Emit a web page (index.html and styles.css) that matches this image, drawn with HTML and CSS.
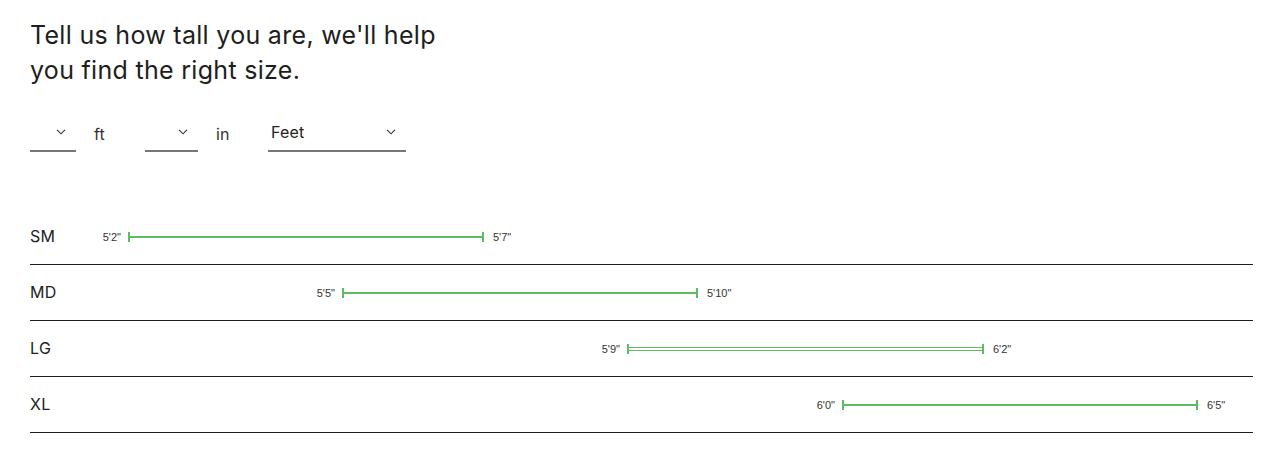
FILE: index.html
```html
<!DOCTYPE html>
<html lang="en">
<head>
<meta charset="utf-8">
<title>Size finder</title>
<link rel="stylesheet" href="styles.css">
</head>
<body>
<main class="finder">
  <h1 class="title">Tell us how tall you are, we'll help<br>you find the right size.</h1>

  <div class="controls">
    <div class="group">
      <div class="select select--ft">
        <span class="select__value"></span>
        <svg class="chev" width="10" height="6" viewBox="0 0 10 6"><path d="M1 0.8l4 4 4-4" fill="none" stroke="#333" stroke-width="1.1"/></svg>
      </div>
      <span class="unit unit--ft">ft</span>
    </div>
    <div class="group">
      <div class="select select--in">
        <span class="select__value"></span>
        <svg class="chev" width="10" height="6" viewBox="0 0 10 6"><path d="M1 0.8l4 4 4-4" fill="none" stroke="#333" stroke-width="1.1"/></svg>
      </div>
      <span class="unit unit--in">in</span>
    </div>
    <div class="group">
      <div class="select select--unit">
        <span class="select__value">Feet</span>
        <svg class="chev" width="10" height="6" viewBox="0 0 10 6"><path d="M1 0.8l4 4 4-4" fill="none" stroke="#333" stroke-width="1.1"/></svg>
      </div>
    </div>
  </div>

  <div class="sizes">
    <div class="size-row">
      <span class="size-label">SM</span>
      <div class="track">
        <div class="range" style="margin-left:12px">
          <span class="range__from">5'2"</span>
          <div class="bar" style="width:356px"><span class="bar__line"></span></div>
          <span class="range__to">5'7"</span>
        </div>
      </div>
    </div>
    <div class="size-row">
      <span class="size-label">MD</span>
      <div class="track">
        <div class="range" style="margin-left:226px">
          <span class="range__from">5'5"</span>
          <div class="bar" style="width:356px"><span class="bar__line"></span></div>
          <span class="range__to">5'10"</span>
        </div>
      </div>
    </div>
    <div class="size-row">
      <span class="size-label">LG</span>
      <div class="track">
        <div class="range" style="margin-left:511px">
          <span class="range__from">5'9"</span>
          <div class="bar bar--hollow" style="width:357px"><span class="bar__line"></span></div>
          <span class="range__to">6'2"</span>
        </div>
      </div>
    </div>
    <div class="size-row">
      <span class="size-label">XL</span>
      <div class="track">
        <div class="range" style="margin-left:726px">
          <span class="range__from">6'0"</span>
          <div class="bar" style="width:356px"><span class="bar__line"></span></div>
          <span class="range__to">6'5"</span>
        </div>
      </div>
    </div>
  </div>
</main>
</body>
</html>
```

FILE: styles.css
```css
* { box-sizing: border-box; }

html, body {
  margin: 0;
  padding: 0;
  background: #fff;
}

body {
  font-family: Inter, "Noto Sans", "Liberation Sans", sans-serif;
  color: #222;
}

.finder {
  padding: 18px 28px 0 30px;
}

.title {
  margin: 0;
  font-size: 25px;
  line-height: 35px;
  font-weight: 400;
  color: #1e1e1e;
  letter-spacing: 0.3px;
}

.controls {
  display: flex;
  align-items: flex-end;
  margin-top: 27px;
  height: 37px;
}

.group {
  display: flex;
  align-items: center;
}

.select {
  display: flex;
  align-items: center;
  justify-content: space-between;
  height: 37px;
  border-bottom: 2px solid #777;
  padding: 0 10px 0 3px;
  font-size: 16px;
  color: #222;
}

.select--ft { width: 46px; }
.select--in { width: 53px; }
.select--unit { width: 138px; padding-right: 10px; }

.select__value {
  line-height: 20px;
  padding-bottom: 1px;
  letter-spacing: 0.2px;
}

.chev {
  display: block;
  margin-bottom: 2px;
}

.unit {
  font-size: 16px;
  color: #333;
  padding-left: 18px;
  padding-top: 1px;
  letter-spacing: 0.2px;
}

.unit--ft { width: 69px; }
.unit--in { width: 70px; }

.sizes {
  margin-top: 57px;
}

.size-row {
  display: flex;
  align-items: center;
  height: 56px;
  border-bottom: 1px solid #1f1f1f;
}

.size-label {
  width: 60px;
  flex: none;
  font-size: 16px;
  color: #222;
  letter-spacing: 0.3px;
  padding-bottom: 1px;
}

.track {
  flex: 1;
  display: flex;
  align-items: center;
}

.range {
  display: flex;
  align-items: center;
  font-family: "Liberation Sans", Arial, sans-serif;
  font-size: 11px;
  color: #333;
}

.range__from {
  width: 26px;
  padding-right: 7px;
  text-align: right;
  white-space: nowrap;
}

.range__to {
  padding-left: 9px;
  white-space: nowrap;
}

.bar {
  display: flex;
  align-items: center;
  height: 10px;
}

.bar::before,
.bar::after {
  content: "";
  width: 2px;
  height: 10px;
  background: #5dbb63;
  flex: none;
}

.bar__line {
  flex: 1;
  height: 2px;
  background: #5dbb63;
}

.bar--hollow .bar__line {
  height: 4px;
  background: #fff;
  border-top: 1px solid #5dbb63;
  border-bottom: 1px solid #5dbb63;
}
```
